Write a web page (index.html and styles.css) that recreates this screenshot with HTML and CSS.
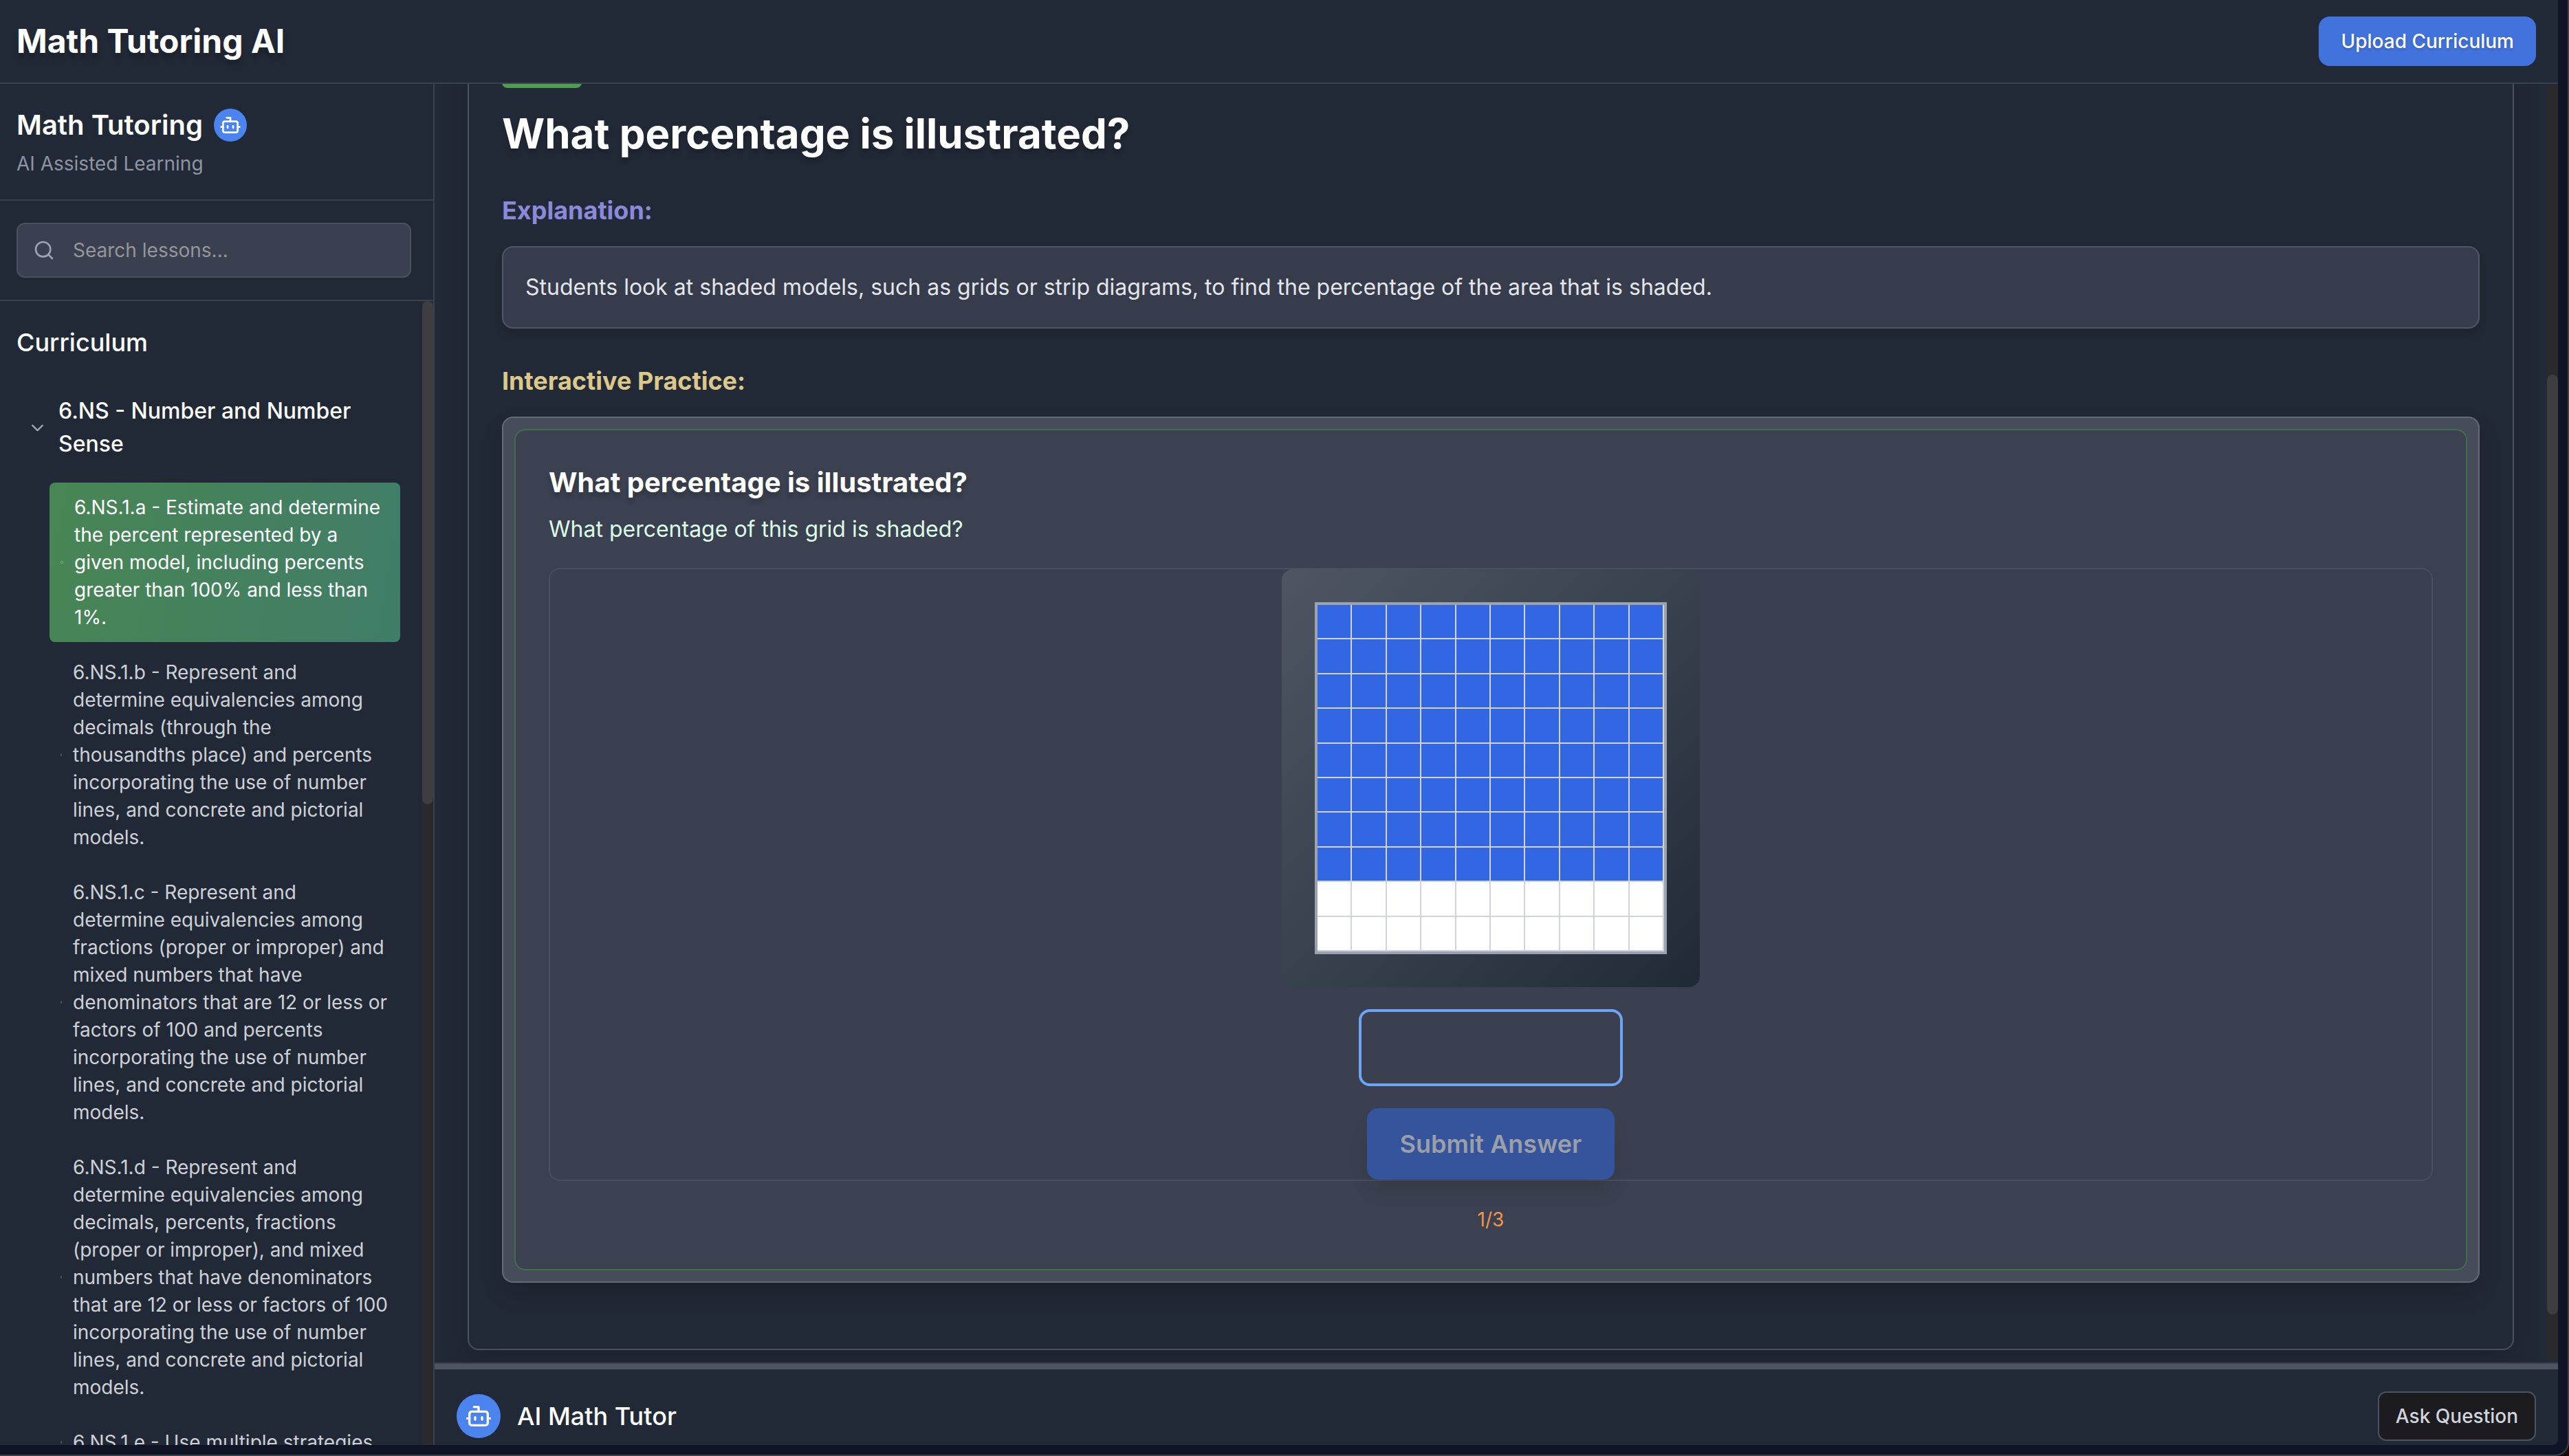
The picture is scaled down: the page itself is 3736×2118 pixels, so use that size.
FILE: index.html
```html
<!DOCTYPE html>
<html lang="en">
<head>
<meta charset="utf-8">
<title>Math Tutoring AI</title>
<link rel="stylesheet" href="styles.css">
</head>
<body>
<svg class="sprite" aria-hidden="true">
  <symbol id="bot" viewBox="0 0 24 24">
    <path d="M12 8V4H8"/>
    <rect width="16" height="12" x="4" y="8" rx="2"/>
    <path d="M2 14h2M20 14h2M15 13v2M9 13v2"/>
  </symbol>
</svg>
<div class="window">
  <div class="app">
    <header class="topbar">
      <h1 class="brand">Math Tutoring AI</h1>
      <button class="btn btn-upload" type="button">Upload Curriculum</button>
    </header>
    <div class="body">
      <aside class="sidebar">
        <div class="side-head">
          <div class="side-title">
            <h2>Math Tutoring</h2>
            <span class="avatar avatar-sm"><svg><use href="#bot"/></svg></span>
          </div>
          <p>AI Assisted Learning</p>
        </div>
        <div class="side-search">
          <label class="search">
            <svg viewBox="0 0 24 24" aria-hidden="true"><circle cx="11" cy="11" r="8"/><path d="m21 21-4.3-4.3"/></svg>
            <input type="text" placeholder="Search lessons..." aria-label="Search lessons">
          </label>
        </div>
        <div class="side-scroll">
          <nav class="curriculum">
            <h3>Curriculum</h3>
            <button class="unit" type="button">
              <svg viewBox="0 0 24 24" aria-hidden="true"><path d="m6 9 6 6 6-6"/></svg>
              <span>6.NS - Number and Number Sense</span>
            </button>
            <ul class="lessons">
              <li><a class="lesson-link active" href="#a"><i class="dot"></i><span>6.NS.1.a - Estimate and determine the percent represented by a given model, including percents greater than 100% and less than 1%.</span></a></li>
              <li><a class="lesson-link" href="#b"><i class="dot"></i><span>6.NS.1.b - Represent and determine equivalencies among decimals (through the thousandths place) and percents incorporating the use of number lines, and concrete and pictorial models.</span></a></li>
              <li><a class="lesson-link" href="#c"><i class="dot"></i><span>6.NS.1.c - Represent and determine equivalencies among fractions (proper or improper) and mixed numbers that have denominators that are 12 or less or factors of 100 and percents incorporating the use of number lines, and concrete and pictorial models.</span></a></li>
              <li><a class="lesson-link" href="#d"><i class="dot"></i><span>6.NS.1.d - Represent and determine equivalencies among decimals, percents, fractions (proper or improper), and mixed numbers that have denominators that are 12 or less or factors of 100 incorporating the use of number lines, and concrete and pictorial models.</span></a></li>
              <li><a class="lesson-link" href="#e"><i class="dot"></i><span>6.NS.1.e - Use multiple strategies</span></a></li>
            </ul>
          </nav>
          <div class="scrollbar"><div class="thumb thumb-side"></div></div>
        </div>
      </aside>
      <main class="main">
        <div class="main-scroll">
          <div class="lesson">
            <article class="card">
              <span class="badge"></span>
              <h2 class="lesson-title">What percentage is illustrated?</h2>
              <h3 class="section-title explain">Explanation:</h3>
              <div class="explain-box">Students look at shaded models, such as grids or strip diagrams, to find the percentage of the area that is shaded.</div>
              <h3 class="section-title practice">Interactive Practice:</h3>
              <div class="practice-box">
                <section class="question">
                  <h4>What percentage is illustrated?</h4>
                  <p class="prompt" id="prompt">What percentage of this grid is shaded?</p>
                  <form class="answer">
                    <div class="grid-panel"><div class="grid" id="grid"></div></div>
                    <input class="answer-input" type="text" aria-labelledby="prompt">
                    <button class="btn-submit" type="button" disabled>Submit Answer</button>
                  </form>
                  <p class="progress">1/3</p>
                </section>
              </div>
            </article>
          </div>
          <div class="scrollbar"><div class="thumb-space"></div><div class="thumb thumb-main"></div></div>
        </div>
        <div class="resizer"></div>
        <footer class="tutor">
          <div class="tutor-name">
            <span class="avatar"><svg><use href="#bot"/></svg></span>
            <h2>AI Math Tutor</h2>
          </div>
          <button class="btn btn-ask" type="button">Ask Question</button>
        </footer>
      </main>
    </div>
  </div>
</div>
<script src="grid.js"></script>
</body>
</html>
```
FILE: grid.js
```js
// Fill the 10 x 10 model: the first 80 cells are shaded.
const grid = document.getElementById('grid');
for (let i = 0; i < 100; i++) {
  const cell = document.createElement('div');
  cell.className = i < 80 ? 'cell shaded' : 'cell';
  grid.appendChild(cell);
}
```
FILE: styles.css
```css
* { box-sizing: border-box; }
html, body { height: 100%; margin: 0; }
body {
  background: #160b08;
  color: #fff;
  font-family: Inter, "Liberation Sans", sans-serif;
  font-size: 28px;
  line-height: 40px;
  overflow: hidden;
}
h1, h2, h3, h4, p, ul { margin: 0; padding: 0; }
ul { list-style: none; }
button, input { font-family: inherit; margin: 0; }
svg { fill: none; stroke: currentColor; stroke-width: 2; stroke-linecap: round; stroke-linejoin: round; flex: none; }
.sprite { position: absolute; width: 0; height: 0; }

.window {
  height: 100vh;
  padding: 0 14px 14px 0;
  background: #0f1424;
  border: solid #3c4049;
  border-width: 0 2px 2px 0;
  border-bottom-right-radius: 20px;
}
.app {
  height: 100%;
  display: flex;
  flex-direction: column;
  background: #222936;
  border-bottom-right-radius: 8px;
  overflow: hidden;
}

.topbar {
  flex: none;
  display: flex;
  align-items: center;
  justify-content: space-between;
  padding: 24px 32px 24px 24px;
  border-bottom: 2px solid #38414f;
}
.brand {
  font-size: 48px;
  line-height: 64px;
  font-weight: 700;
  text-shadow: 0 8px 6px rgba(0, 0, 0, .2);
}
.btn {
  height: 72px;
  font-size: 28px;
  line-height: 40px;
  font-weight: 500;
}
.btn-upload {
  padding: 0 32px;
  border: 0;
  border-radius: 16px;
  background: #4273dd;
  color: #fff;
  text-shadow: 0 2px 4px rgba(0, 0, 0, .2);
}

.body { flex: 1; min-height: 0; display: flex; }

.sidebar {
  flex: none;
  width: 632px;
  display: flex;
  flex-direction: column;
  border-right: 2px solid #38414f;
}
.side-head { padding: 32px 32px 32px 24px; border-bottom: 2px solid #38414f; }
.side-title { display: flex; align-items: center; gap: 16px; margin-bottom: 8px; }
.side-title h2 { font-size: 40px; line-height: 56px; font-weight: 600; }
.side-head p { color: #8e94a1; }
.avatar {
  width: 64px;
  height: 64px;
  border-radius: 50%;
  background: #4b84ee;
  display: flex;
  align-items: center;
  justify-content: center;
}
.avatar svg { width: 40px; height: 40px; }
.avatar-sm { width: 48px; height: 48px; }
.avatar-sm svg { width: 32px; height: 32px; }

.side-search { padding: 32px 32px 32px 24px; border-bottom: 2px solid #38414f; }
.search {
  display: flex;
  align-items: center;
  gap: 26px;
  height: 80px;
  padding: 0 22px;
  border: 2px solid #4a5160;
  border-radius: 12px;
  background: #3a4050;
}
.search svg { width: 32px; height: 32px; color: #9ca3af; }
.search input {
  flex: 1;
  min-width: 0;
  padding: 0;
  border: 0;
  outline: 0;
  background: none;
  color: #fff;
  font-size: 28px;
  line-height: 40px;
}
.search input::placeholder { color: #95969b; opacity: 1; }

.side-scroll, .main-scroll { flex: 1; min-height: 0; display: flex; }
.curriculum { flex: 1; min-width: 0; padding: 32px 32px 0 24px; overflow: hidden; }
.curriculum h3 { font-size: 36px; line-height: 56px; font-weight: 500; margin-bottom: 24px; }
.unit {
  display: flex;
  align-items: center;
  gap: 16px;
  width: 100%;
  padding: 24px 16px;
  margin-bottom: 8px;
  border: 0;
  background: none;
  color: #fff;
  font-size: 32px;
  line-height: 48px;
  font-weight: 500;
  text-align: left;
}
.unit svg { width: 29px; height: 29px; color: #9ca3af; }
.lessons { display: flex; flex-direction: column; gap: 8px; padding-left: 48px; }
.lesson-link {
  display: flex;
  align-items: center;
  gap: 16px;
  padding: 16px;
  border-radius: 8px;
  color: #cdd1d7;
  text-decoration: none;
}
.lesson-link.active { color: #fff; background: linear-gradient(100deg, #488654, #407d68); }
.dot { flex: none; width: 2px; height: 4px; border: 1px solid #4b5362; border-radius: 1px; }
.active .dot { width: 4px; border-color: #7ba585; }

.scrollbar { flex: none; width: 16px; display: flex; flex-direction: column; background: #2a292d; }
.thumb { border-radius: 8px; background: #3e3d42; }
.thumb-side { height: 44%; }
/* Scroll offset above the thumb, as a share of the track. */
.thumb-space { height: 22.75%; }
.thumb-main { height: 73.5%; }

.main { flex: 1; min-width: 0; display: flex; flex-direction: column; }
/* The lesson is scrolled down, so the card runs up behind the top bar. */
.lesson {
  flex: 1;
  min-width: 0;
  display: flex;
  flex-direction: column;
  justify-content: flex-end;
  padding: 0 48px 18px;
  overflow: hidden;
}
.card {
  flex: none;
  padding: 48px 48px 96px;
  border: 2px solid #4a505e;
  border-radius: 16px;
  box-shadow: 0 20px 40px rgba(0, 0, 0, .16);
}
.badge {
  display: block;
  width: 116px;
  height: 48px;
  margin-bottom: 30px;
  border-radius: 8px;
  background: #4d9e4f;
}
.lesson-title {
  font-size: 60px;
  line-height: 72px;
  font-weight: 700;
  margin-bottom: 48px;
  text-shadow: 0 6px 6px rgba(0, 0, 0, .2);
}
.section-title { font-size: 36px; line-height: 56px; font-weight: 700; margin-bottom: 24px; }
.explain { color: #8b89d9; }
.practice { color: #dcc88a; }
.explain-box {
  padding: 32px;
  margin-bottom: 48px;
  border: 2px solid #505664;
  border-radius: 16px;
  background: #363c4b;
  color: #e3e6ea;
  font-size: 32px;
  line-height: 52px;
  box-shadow: 0 8px 12px rgba(0, 0, 0, .12);
}
.practice-box {
  padding: 16px;
  border: 2px solid #646a76;
  border-radius: 16px;
  background: #464c59;
  box-shadow: 0 16px 30px rgba(0, 0, 0, .16);
}
.question {
  padding: 48px;
  border: 2px solid #3e7049;
  border-radius: 16px;
  background: #3b4150;
}
.question h4 {
  font-size: 40px;
  line-height: 56px;
  font-weight: 700;
  margin-bottom: 16px;
  text-shadow: 0 6px 6px rgba(0, 0, 0, .2);
}
.prompt { font-size: 32px; line-height: 48px; color: #dcfce7; margin-bottom: 32px; }
.answer {
  display: flex;
  flex-direction: column;
  align-items: center;
  gap: 32px;
  border: 2px solid #484f5d;
  border-radius: 16px;
  background: #3a404f;
}
.grid-panel {
  padding: 48px;
  border-radius: 16px;
  background: linear-gradient(135deg, #4f5563, #38414e 50%, #202936);
}
.grid {
  width: 512px;
  height: 512px;
  border: 4px solid #9ca3af;
  display: grid;
  grid-template-columns: repeat(10, 1fr);
  grid-template-rows: repeat(10, 1fr);
}
.cell { background: #fff; border: solid #d1d5db; border-width: 0 2px 2px 0; }
.cell.shaded { background: #3266e3; }
.answer-input {
  width: 384px;
  height: 112px;
  padding: 0 32px;
  border: 4px solid #6ea4f4;
  border-radius: 16px;
  outline: 0;
  background: transparent;
  color: #fff;
  font-size: 36px;
  text-align: center;
}
.btn-submit {
  padding: 24px 48px;
  border: 0;
  border-radius: 16px;
  background: #36549b;
  color: #9b9fa8;
  font-size: 36px;
  line-height: 56px;
  font-weight: 600;
  box-shadow: 0 20px 30px -6px rgba(0, 0, 0, .12);
}
.progress { margin-top: 32px; line-height: 48px; text-align: center; color: #f0954b; }

.resizer { flex: none; height: 10px; border-top: 2px solid #3a4251; background: #4e5462; }
.tutor {
  flex: none;
  display: flex;
  align-items: center;
  justify-content: space-between;
  padding: 32px 32px 6px;
}
.tutor-name { display: flex; align-items: center; gap: 24px; }
.tutor-name h2 { font-size: 36px; line-height: 56px; font-weight: 500; }
.btn-ask {
  padding: 0 24px;
  border: 2px solid #4a5361;
  border-radius: 12px;
  background: #1c1b20;
  color: #d1d5db;
}
```
